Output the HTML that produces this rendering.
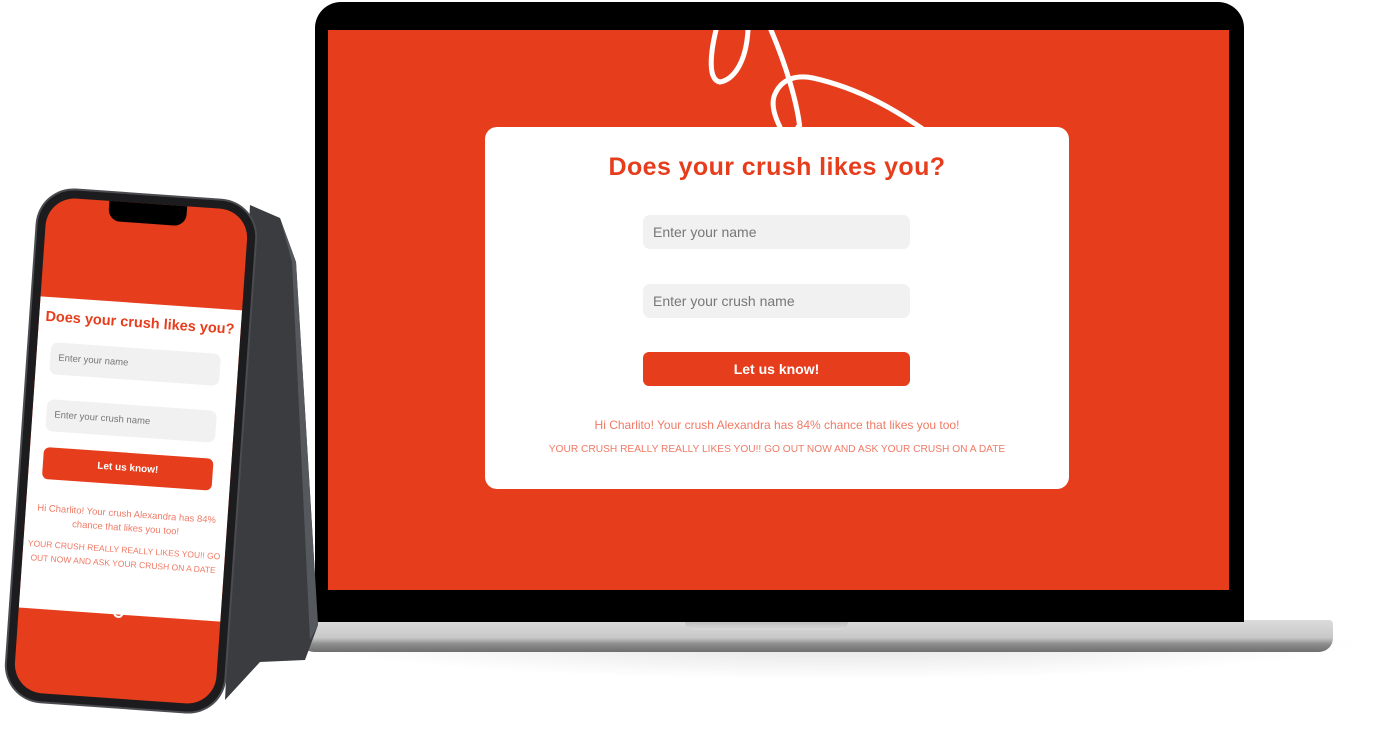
<!DOCTYPE html>
<html><head><meta charset="utf-8"><style>
*{margin:0;padding:0;box-sizing:border-box}
body{width:1387px;height:746px;background:#fff;position:relative;overflow:hidden;font-family:"Liberation Sans",sans-serif}
.abs{position:absolute}
.t{color:#e63d1c;font-weight:bold;text-align:center;white-space:nowrap}
.inp{background:#f1f1f1;border-radius:7px;color:#777;}
.btn{background:#e63d1c;color:#fff;font-weight:bold;text-align:center;border-radius:6px}
.msg{color:#f07a66;text-align:center;white-space:nowrap}
</style></head><body>
<div class="abs" style="left:290px;top:640px;width:1080px;height:40px;background:radial-gradient(ellipse at 50% 0%,rgba(0,0,0,0.12),rgba(0,0,0,0) 70%)"></div>
<div class="abs" style="left:300px;top:620px;width:1033px;height:32px;border-radius:2px 4px 14px 14px;background:linear-gradient(#dcdcdc,#c8c8c8 55%,#8e8e8e 75%,#6e6e6e)"></div>
<div class="abs" style="left:685px;top:620px;width:163px;height:10px;border-radius:0 0 8px 8px;background:linear-gradient(#bbb,#d9d9d9)"></div>
<div class="abs" style="left:315px;top:2px;width:929px;height:620px;background:#000;border-radius:26px 26px 0 0"></div>
<div class="abs" style="left:328px;top:30px;width:901px;height:560px;background:#e63d1c;overflow:hidden">
<svg class="abs" style="left:0;top:0" width="901" height="560"><g fill="none" stroke="#fff" stroke-width="5" stroke-linecap="round">
<path d="M388 0 C382 25 380 50 392 52 C404 50 418 35 420 0"/>
<path d="M443 0 C458 35 470 75 472 100 L470 97"/>
<path d="M452 97 C446 85 442 72 448 62 C455 48 470 45 485 48 C530 58 570 80 610 110"/>
</g></svg>
<div class="abs" style="left:157px;top:97px;width:584px;height:362px;background:#fff;border-radius:12px">
<div class="abs t" style="left:0;top:26px;width:584px;font-size:25px;letter-spacing:0.4px">Does your crush likes you?</div>
<div class="abs inp" style="left:158px;top:88px;width:267px;height:34px;font-size:14px;line-height:34px;padding-left:10px">Enter your name</div>
<div class="abs inp" style="left:158px;top:157px;width:267px;height:34px;font-size:14px;line-height:34px;padding-left:10px">Enter your crush name</div>
<div class="abs btn" style="left:158px;top:225px;width:267px;height:34px;font-size:14px;line-height:34px">Let us know!</div>
<div class="abs msg" style="left:0;top:291px;width:584px;font-size:12px">Hi Charlito! Your crush Alexandra has 84% chance that likes you too!</div>
<div class="abs msg" style="left:0;top:317px;width:584px;font-size:10.2px">YOUR CRUSH REALLY REALLY LIKES YOU!! GO OUT NOW AND ASK YOUR CRUSH ON A DATE</div>
</div>
</div>
<svg class="abs" style="left:0;top:0" width="340" height="746">
<polygon points="250,205 280,218 296,262 318,625 305,660 260,662 225,700" fill="#3a3c40"/>
<polygon points="280,218 296,262 318,625 310,640 292,262" fill="#55585d"/>
</svg>
<div class="abs" style="left:22px;top:195px;width:218px;height:512px;background:#1c1c1e;border-radius:36px;transform:rotate(4deg);box-shadow:0 0 0 2px #4a4c50">
<div class="abs" style="left:8px;top:8px;width:202px;height:496px;background:#e63d1c;border-radius:29px;overflow:hidden">
<div class="abs" style="left:62px;top:-2px;width:78px;height:22px;background:#000;border-radius:0 0 12px 12px"></div>
<div class="abs" style="left:0;top:100px;width:202px;height:312px;background:#fff">
<div class="abs t" style="left:0;top:12px;width:202px;font-size:14.5px">Does your crush likes you?</div>
<div class="abs inp" style="left:14px;top:45px;width:170px;height:32px;font-size:9.5px;line-height:32px;padding-left:8px">Enter your name</div>
<div class="abs inp" style="left:14px;top:102px;width:170px;height:32px;font-size:9.5px;line-height:32px;padding-left:8px">Enter your crush name</div>
<div class="abs btn" style="left:14px;top:150px;width:170px;height:32px;font-size:10px;line-height:32px">Let us know!</div>
<div class="abs msg" style="left:0;top:205px;width:202px;font-size:9.5px;white-space:normal;line-height:14px;padding:0 8px">Hi Charlito! Your crush Alexandra has 84% chance that likes you too!</div>
<div class="abs msg" style="left:-4px;top:240px;width:210px;font-size:8.5px;white-space:normal;line-height:14px">YOUR CRUSH REALLY REALLY LIKES YOU!! GO OUT NOW AND ASK YOUR CRUSH ON A DATE</div>
</div>
<svg class="abs" style="left:90px;top:400px" width="50" height="30"><path d="M10 0 C2 10 6 16 12 14 C16 10 18 4 18 0 M20 0 L38 10" fill="none" stroke="#fff" stroke-width="2"/></svg>
</div>
</div>
</body></html>
